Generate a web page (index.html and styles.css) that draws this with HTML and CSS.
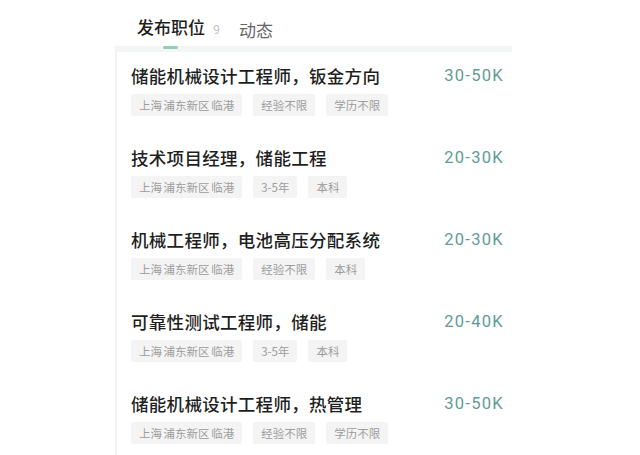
FILE: index.html
```html
<!DOCTYPE html>
<html lang="zh">
<head>
<meta charset="utf-8">
<link rel="stylesheet" href="styles.css">
</head>
<body>
<div class="page">
  <div class="tabs">
    <div class="tab active">
      <span class="tab-label">发布职位</span><span class="count">9</span>
      <span class="indicator"></span>
    </div>
    <div class="tab">动态</div>
  </div>
  <div class="band"></div>
  <div class="list">
    <div class="job">
      <div class="head"><span class="title">储能机械设计工程师，钣金方向</span><span class="salary">30-50K</span></div>
      <div class="tags"><span class="tag">上海 浦东新区 临港</span><span class="tag">经验不限</span><span class="tag">学历不限</span></div>
    </div>
    <div class="job">
      <div class="head"><span class="title">技术项目经理，储能工程</span><span class="salary">20-30K</span></div>
      <div class="tags"><span class="tag">上海 浦东新区 临港</span><span class="tag">3-5年</span><span class="tag">本科</span></div>
    </div>
    <div class="job">
      <div class="head"><span class="title">机械工程师，电池高压分配系统</span><span class="salary">20-30K</span></div>
      <div class="tags"><span class="tag">上海 浦东新区 临港</span><span class="tag">经验不限</span><span class="tag">本科</span></div>
    </div>
    <div class="job">
      <div class="head"><span class="title">可靠性测试工程师，储能</span><span class="salary">20-40K</span></div>
      <div class="tags"><span class="tag">上海 浦东新区 临港</span><span class="tag">3-5年</span><span class="tag">本科</span></div>
    </div>
    <div class="job">
      <div class="head"><span class="title">储能机械设计工程师，热管理</span><span class="salary">30-50K</span></div>
      <div class="tags"><span class="tag">上海 浦东新区 临港</span><span class="tag">经验不限</span><span class="tag">学历不限</span></div>
    </div>
  </div>
</div>
</body>
</html>
```
FILE: styles.css
```css
html, body {
  margin: 0;
  padding: 0;
  background: #ffffff;
  font-family: "Noto Sans CJK SC", "Noto Sans", sans-serif;
}
.page {
  width: 640px;
  height: 455px;
  overflow: hidden;
  padding-left: 115px;
  box-sizing: border-box;
}
.tabs {
  display: flex;
  align-items: flex-end;
  height: 46px;
  padding-left: 22px;
  gap: 19px;
  box-sizing: border-box;
}
.tab {
  position: relative;
  font-size: 17px;
  line-height: 24px;
  color: #666666;
  padding-bottom: 4px;
}
.tab.active {
  color: #1e1e1e;
  font-weight: 500;
}
.count {
  font-size: 12.5px;
  color: #c4c4c4;
  margin-left: 8px;
  font-weight: 400;
  font-family: "Roboto", sans-serif;
}
.indicator {
  position: absolute;
  left: 26px;
  bottom: -3px;
  width: 15px;
  height: 3px;
  border-radius: 2px;
  background: #8fcdbd;
}
.band {
  width: 397px;
  height: 6px;
  background: #f4f5f5;
}
.list {
  width: 395px;
  border-left: 2px solid #f2f2f2;
}
.job {
  padding: 11px 8px 19px 14px;
  height: 82px;
  box-sizing: border-box;
}
.head {
  display: flex;
  justify-content: space-between;
  align-items: center;
  height: 24px;
}
.title {
  font-size: 17.5px;
  font-weight: 500;
  color: #1f1f1f;
  letter-spacing: 0.3px;
}
.salary {
  font-family: "Roboto", "Noto Sans", sans-serif;
  font-size: 16.5px;
  color: #5f9c95;
  letter-spacing: 1.3px;
}
.tags {
  display: flex;
  gap: 11px;
  margin-top: 7px;
}
.tag {
  background: #f4f4f4;
  color: #9c9c9c;
  font-size: 11.5px;
  line-height: 22px;
  height: 22px;
  padding: 0 8px;
  border-radius: 2px;
  word-spacing: -1px;
}
```
